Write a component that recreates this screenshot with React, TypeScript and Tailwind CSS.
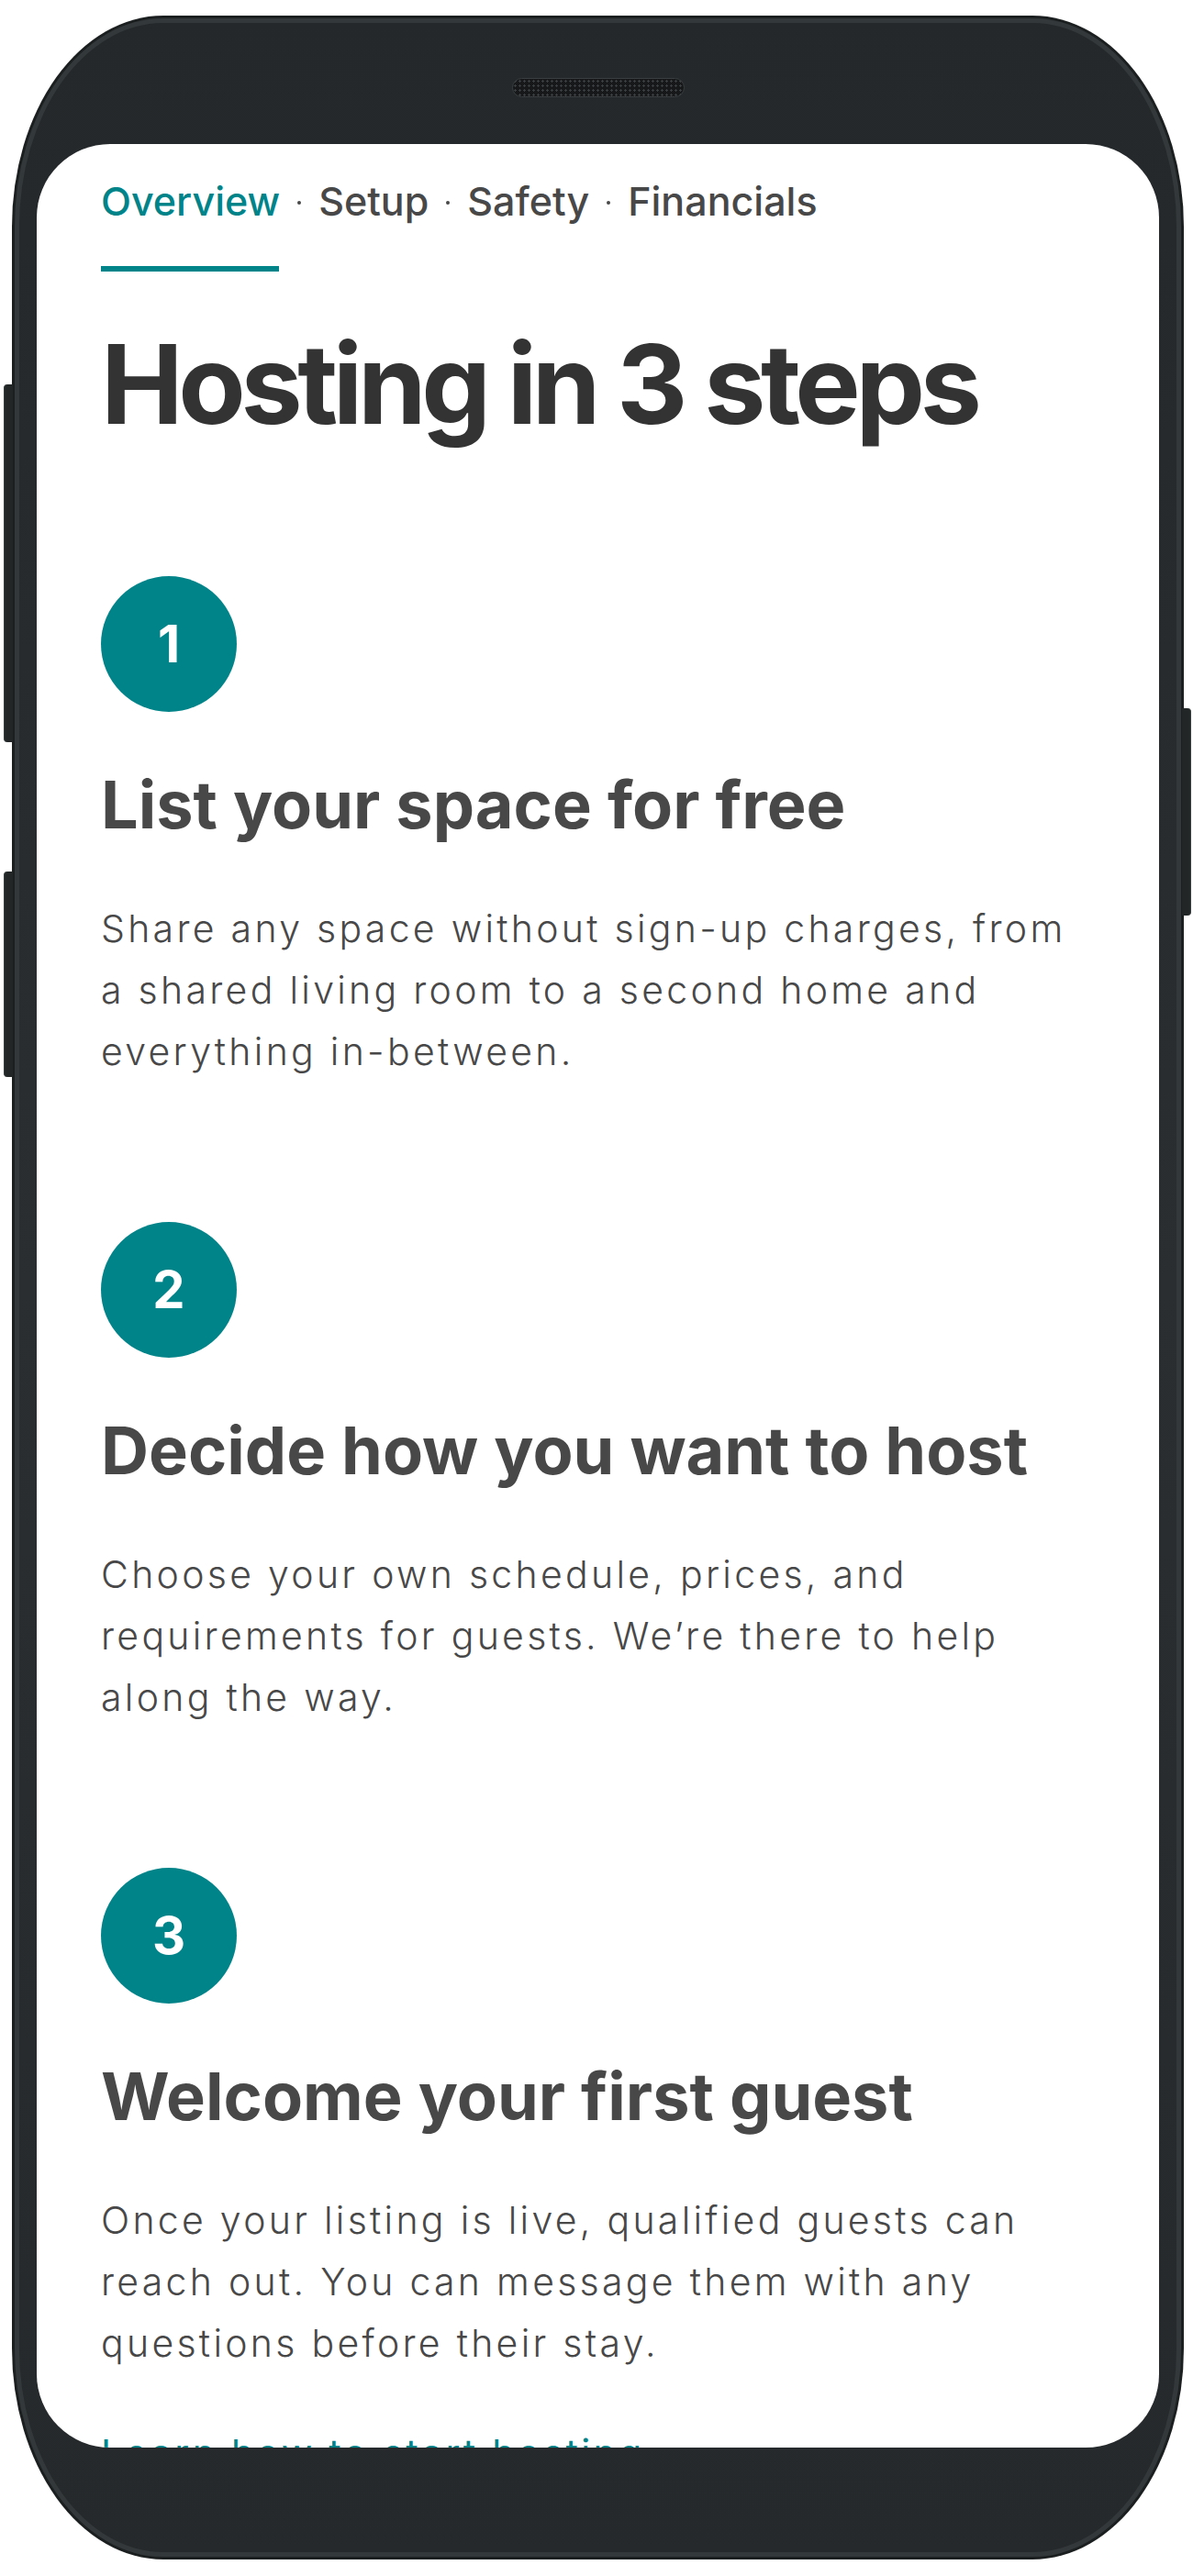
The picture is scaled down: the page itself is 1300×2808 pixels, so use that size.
import React from "react";

const steps = [
  {
    n: "1",
    title: "List your space for free",
    lines: [
      "Share any space without sign-up charges, from",
      "a shared living room to a second home and",
      "everything in-between.",
    ],
  },
  {
    n: "2",
    title: "Decide how you want to host",
    lines: [
      "Choose your own schedule, prices, and",
      "requirements for guests. We\u2019re there to help",
      "along the way.",
    ],
  },
  {
    n: "3",
    title: "Welcome your first guest",
    lines: [
      "Once your listing is live, qualified guests can",
      "reach out. You can message them with any",
      "questions before their stay.",
    ],
  },
];

function Dot() {
  return <span className="w-[4px] h-[4px] rounded-full bg-[#484848] mt-[4px]" />;
}

export default function App() {
  return (
    <div
      className="w-[1300px] h-[2808px] bg-white pt-[17px] pl-[13px] relative overflow-hidden"
      style={{ fontFamily: "Inter, 'Noto Sans', sans-serif" }}
    >
      {/* side buttons */}
      <div className="absolute left-[4px] top-[419px] w-[10px] h-[390px] rounded-l-[4px] bg-[#232627] border-l border-[#3b4042]" />
      <div className="absolute left-[4px] top-[950px] w-[10px] h-[224px] rounded-l-[4px] bg-[#232627] border-l border-[#3b4042]" />
      <div className="absolute left-[1288px] top-[772px] w-[10px] h-[226px] rounded-r-[4px] bg-[#232627] border-r border-[#3b4042]" />

      {/* phone body */}
      <div className="w-[1277px] h-[2773px] rounded-[165px/230px] bg-[#1c1f20] p-[3px]">
        <div className="w-full h-full rounded-[162px/227px] bg-gradient-to-b from-[#24282a] via-[#2a2e30] to-[#26292b] shadow-[inset_0_0_0_5px_#33383a] flex flex-col px-[24px]">
          {/* top bezel */}
          <div className="h-[137px] shrink-0 flex justify-center pt-[65px]">
            <div className="w-[188px] h-[21px] rounded-full bg-[#161819] border border-[#3a3e40] bg-[radial-gradient(circle,#3a3e40_1px,transparent_1.2px)] bg-[length:5px_5px]" />
          </div>

          {/* screen */}
          <div className="h-[2511px] shrink-0 bg-white rounded-[80px] overflow-hidden pl-[70px] pr-[40px] pt-[34px]">
            <nav className="flex items-center gap-[19px] text-[43px] leading-[56px] font-medium text-[#484848]">
              <span className="text-[#008489]">Overview</span>
              <Dot />
              <span>Setup</span>
              <Dot />
              <span>Safety</span>
              <Dot />
              <span>Financials</span>
            </nav>
            <div className="mt-[43px] w-[194px] h-[6px] bg-[#008489]" />

            <h1 className="mt-[63px] text-[120px] leading-[120px] font-bold tracking-[-0.045em] text-[#333333] whitespace-nowrap">
              Hosting in 3 steps
            </h1>

            <div className="mt-[149px] flex flex-col gap-[152px]">
              {steps.map((s) => (
                <section key={s.n} className="flex flex-col">
                  <div className="w-[148px] h-[148px] rounded-full bg-[#008489] flex items-center justify-center text-white text-[56px] font-bold">
                    {s.n}
                  </div>
                  <h2 className="mt-[57px] text-[72px] leading-[88px] font-bold text-[#484848] whitespace-nowrap">
                    {s.title}
                  </h2>
                  <p className="mt-[58px] text-[41px] leading-[67px] font-light tracking-[0.08em] text-[#484848]">
                    {s.lines.map((l, i) => (
                      <span key={i} className="block whitespace-nowrap">
                        {l}
                      </span>
                    ))}
                  </p>
                </section>
              ))}
            </div>

            <div className="mt-[53px] text-[41px] leading-[67px] font-normal tracking-[0.08em] text-[#008489] whitespace-nowrap">
              Learn how to start hosting
            </div>
          </div>
        </div>
      </div>
    </div>
  );
}
